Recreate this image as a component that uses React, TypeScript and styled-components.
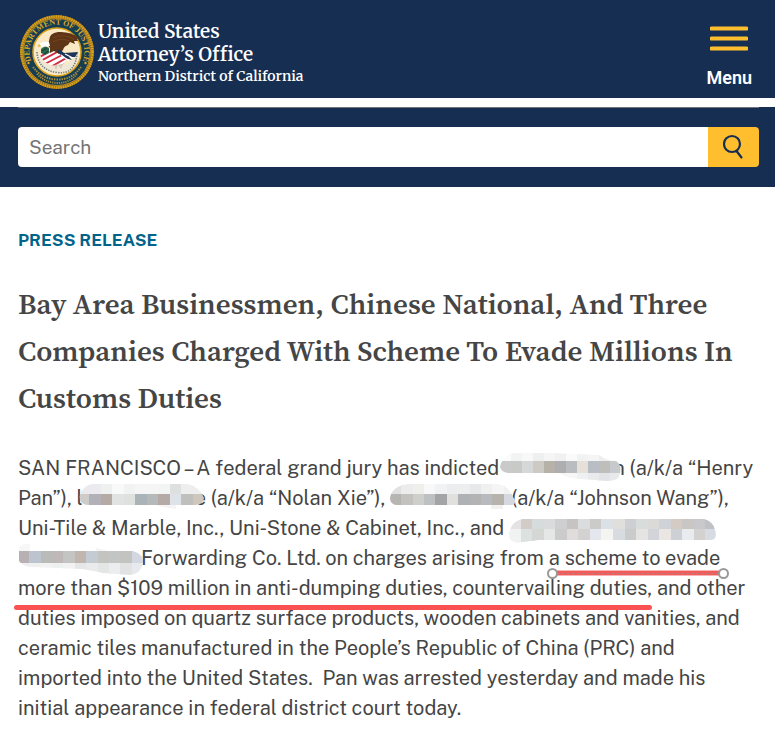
import React from "react";
import styled, { createGlobalStyle } from "styled-components";

const navy = "#162e51";
const gold = "#ffbe2e";
const ink = "#454545";
const red = "#fa5252";

const GlobalStyle = createGlobalStyle`
  *, *::before, *::after { box-sizing: border-box; }
  body {
    margin: 0;
    background: #fff;
    color: ${ink};
    font-family: "Public Sans", "Open Sans", sans-serif;
  }
`;

const Header = styled.header`
  display: flex;
  justify-content: space-between;
  align-items: flex-start;
  padding: 14px 17px 0 18px;
  height: 98px;
  background: ${navy};
  color: #fff;
`;

const Brand = styled.a`
  display: flex;
  gap: 3px;
  color: inherit;
  text-decoration: none;
  font-family: Merriweather, "Liberation Serif", serif;
  font-weight: 600;
`;

const SealIcon = styled.svg`
  display: block;
  width: 77px;
  height: 76px;
`;

const BrandText = styled.span`
  display: flex;
  flex-direction: column;
  padding-top: 6px;
`;

const Office = styled.span`
  font-size: 19px;
  line-height: 23px;
`;

const District = styled.span`
  font-size: 14px;
  line-height: 20px;
`;

const MenuButton = styled.button`
  display: flex;
  flex-direction: column;
  align-items: center;
  gap: 15px;
  padding: 12px 6px 0;
  border: 0;
  background: none;
  color: #fff;
  font: 600 18px/22px Roboto, sans-serif;
  cursor: pointer;
`;

const MenuBars = styled.svg`
  display: block;
  width: 38px;
  height: 26px;
`;

const SearchBand = styled.div`
  margin-top: 9px;
  padding: 0 16px 20px 18px;
  background: ${navy};
`;

const SearchForm = styled.form`
  display: flex;
  padding-top: 19px;
  border-top: 1px solid #71767a;
`;

const SearchInput = styled.input`
  flex: 1;
  min-width: 0;
  height: 40px;
  padding: 0 11px;
  border: 0;
  border-radius: 4px 0 0 4px;
  background: #fff;
  color: ${ink};
  font: 19px "Public Sans", Inter, sans-serif;
  &::placeholder { color: #757575; opacity: 1; }
`;

const SearchButton = styled.button`
  display: grid;
  place-items: center;
  width: 51px;
  height: 40px;
  padding: 0;
  border: 0;
  border-radius: 0 4px 4px 0;
  background: ${gold};
  cursor: pointer;
`;

const Article = styled.main`
  padding: 42px 18px 0;
`;

const Kicker = styled.p`
  margin: 0;
  color: #00638a;
  font: 700 17px/22px "Public Sans", Inter, sans-serif;
`;

const Title = styled.h1`
  margin: 30px 0 31px;
  font: 600 29px/47px "Source Serif 4", "Liberation Serif", serif;
`;

const Body = styled.p`
  margin: 0;
  font-size: 20px;
  line-height: 30px;
  white-space: nowrap;
`;

const MaskArt = styled.svg<{ $before: number; $after: number }>`
  position: relative;
  display: inline-block;
  height: 30px;
  vertical-align: top;
  overflow: visible;
  margin-left: ${(p) => p.$before}px;
  margin-right: ${(p) => p.$after}px;
`;

const Marked = styled.mark`
  position: relative;
  display: inline-block;
  background: none;
  color: inherit;
`;

const Underline = styled.span`
  position: absolute;
  left: -4px;
  right: 0;
  top: 32px;
  height: 5px;
  border-radius: 3px;
  background: ${red};
`;

const SelectedLine = styled.span`
  position: absolute;
  left: 3px;
  right: -4px;
  top: 27px;
  height: 6px;
  background: linear-gradient(#fbb4b4 0 1px, #f25a5a 1px 5px, #fbb4b4 5px);
  &::before {
    content: "";
    position: absolute;
    inset: 3px 0 auto;
    border-top: 1px dashed #b88080;
  }
`;

const Handle = styled.span<{ $side: "left" | "right" }>`
  position: absolute;
  top: -2px;
  ${(p) => p.$side}: -5px;
  width: 11px;
  height: 11px;
  border: 2px solid #999;
  border-radius: 50%;
  background: #fff;
`;

type Row = { y: number; h: number; colors: string[] };
type MaskProps = {
  id: string;
  width: number;
  outline: string;
  rows: Row[];
  before?: number;
  after?: number;
};

function Mask({ id, width, outline, rows, before = 0, after = 0 }: MaskProps) {
  return (
    <MaskArt width={width} height={30} $before={before} $after={after} role="img" aria-label="Redacted name">
      <clipPath id={id}>
        <path d={outline} />
      </clipPath>
      <g clipPath={`url(#${id})`} shapeRendering="crispEdges">
        {rows.map((row) =>
          row.colors.map((color, i) => (
            <rect
              key={`${row.y}-${i}`}
              x={Math.round((i * width) / row.colors.length)}
              y={row.y}
              width={Math.ceil(width / row.colors.length) + 1}
              height={row.h}
              fill={color}
            />
          ))
        )}
      </g>
    </MaskArt>
  );
}

function Seal() {
  return (
    <SealIcon viewBox="0 0 77 76" role="img" aria-label="Department of Justice seal">
      <defs>
        <path id="ringTop" d="M13 47A27.500 27.500 0 1 1 65 47" />
        <clipPath id="shield">
          <path d="M22 41Q28 37 38 37L49 45Q46 52 39 52Q27 52 22 41Z" />
        </clipPath>
      </defs>
      <circle cx="39" cy="38" r="37" fill="#96701a" />
      <circle cx="39" cy="38" r="35.500" fill="none" stroke="#d9a11c" strokeWidth="2.600" strokeDasharray="1.600 .7" />
      <circle cx="39" cy="38" r="33.500" fill="#173d52" stroke="#b98a23" />
      <circle cx="39" cy="38" r="24" fill="#fbe9c6" stroke="#d9a11c" strokeWidth="1.600" />
      <text fill="#d8a928" fontFamily="Liberation Serif, serif" fontWeight="700" fontSize="8">
        <textPath href="#ringTop" startOffset="50%" textAnchor="middle">DEPARTMENT OF JUSTICE</textPath>
      </text>
      <circle cx="10.500" cy="49" r="1.200" fill="#d8a928" />
      <circle cx="67.500" cy="49" r="1.200" fill="#d8a928" />
      <path d="M15 53Q24 65 39 65.500T63 53" fill="none" stroke="#a88b35" strokeWidth="2" strokeDasharray="1.500 1" />
      <path d="M19 60Q27 68.500 39 69T59 60" fill="none" stroke="#a88b35" strokeWidth="1.800" strokeDasharray="1.300 .9" />
      <path d="M18 34Q17 50 27 56Q39 62 51 56Q61 50 60 34L57 40Q53 52 39 53Q25 52 21 40Z" fill="#efe8d6" />
      <path d="M19 38Q20 56 39 58.500T59 38" fill="none" stroke="#747b7a" strokeWidth="1.600" strokeDasharray="1.300 1.200" />
      <g clipPath="url(#shield)">
        <rect x="18" y="34" width="40" height="24" fill="#fff" />
        <path d="M20 44L34 36M21 48L41 37M25 51L46 40M31 54L50 43M38 55L52 47" stroke="#cf2c46" strokeWidth="1.900" />
      </g>
      <path d="M23 35L27 32L31 34L31 39L27 41L23 39Z" fill="#28654b" />
      <path d="M24 37L29 34M26 40L30 37" stroke="#143f35" strokeWidth="1" />
      <path d="M31 27Q31 19 40 18Q52 17 62 24L59 25L60 27L56 27L57 30L52 28L50 31Q46 32 45 36L41 40L36 37L32 39L32 34Q29 31 31 27Z" fill="#5f3517" />
      <path d="M35 24Q44 19 56 25M35 28Q43 23 51 27" fill="none" stroke="#744519" strokeWidth="1" />
      <path d="M21 30Q25 27 31 28L32 32L24 33Z" fill="#fff" />
      <path d="M21 30L19.500 33L23 32Z" fill="#e4ae37" />
      <path d="M41 35L46 39L60 38L57 43L51 43L54 46L47 44L39 38Z" fill="#1d3557" />
      <path d="M43 41L51 47M47 40L55 44" stroke="#fff" strokeWidth="1.200" />
      <path d="M36 51L38 56L40 51L43 55L45 50Z" fill="#d9cbbb" />
    </SealIcon>
  );
}

export default function App() {
  return (
    <>
      <GlobalStyle />
      <Header>
        <Brand href="#">
          <Seal />
          <BrandText>
            <Office>United States</Office>
            <Office>Attorney’s Office</Office>
            <District>Northern District of California</District>
          </BrandText>
        </Brand>
        <MenuButton type="button">
          <MenuBars viewBox="0 0 38 26" aria-hidden="true">
            <path d="M1.500 2.500H36.500M1.500 12.500H36.500M1.500 22.500H36.500" stroke={gold} strokeWidth="4" strokeLinecap="round" />
          </MenuBars>
          Menu
        </MenuButton>
      </Header>
      <SearchBand>
        <SearchForm role="search">
          <SearchInput type="search" aria-label="Search" placeholder="Search" />
          <SearchButton type="submit" aria-label="Search">
            <svg width="22" height="26" viewBox="0 0 22 26" fill="none" stroke={navy} strokeWidth="2.200" strokeLinecap="round" aria-hidden="true">
              <circle cx="9" cy="10" r="8" />
              <path d="M13.500 17L18.500 23.500" />
            </svg>
          </SearchButton>
        </SearchForm>
      </SearchBand>
      <Article>
        <Kicker>PRESS RELEASE</Kicker>
        <Title>
          Bay Area Businessmen, Chinese National, And Three Companies Charged With Scheme To Evade Millions In Customs
          Duties
        </Title>
        <Body>
          SAN FRANCISCO – A federal grand jury has indicted
          <Mask
            id="mask1"
            width={121}
            before={1}
            after={-8}
            outline="M0 14Q2 3 14 0H50L100 2Q103 7 116 8Q123 12 119 24Q116 28 106 28L70 25L60 20H8Q1 19 0 14Z"
            rows={[
              { y: 0, h: 8, colors: ["#fafbfb", "#f2f4f4", "#f8f8f8", "#eeefef", "#f5f5f5", "#f1f1f1", "#fafafa", "#f1f2f2", "#f5f5f5", "#eee", "#f9f9f9"] },
              { y: 8, h: 12, colors: ["#c9cac9", "#c7cac7", "#d6d7d7", "#cdc9c5", "#b6b2aa", "#aeadaf", "#b9bdc0", "#e6e0d9", "#b9bec4", "#c0bebb", "#c7cacd"] },
              { y: 20, h: 8, colors: ["#f5f5f5", "#f5f5f5", "#f5f5f5", "#f3f3f3", "#f5f5f5", "#f3f3f3", "#f7f7f7", "#eff0f1", "#e9eaeb", "#e2e4e6", "#e8e9ea"] },
            ]}
          />
          n (a/k/a “Henry
          <br />
          Pan”), l
          <Mask
            id="mask2"
            width={126}
            before={-5}
            after={-9}
            outline="M2 12Q5 2 15 1H110Q122 4 126 15Q125 22 117 22H98V26L84 24L78 22H12Q0 22 2 12Z"
            rows={[
              { y: 0, h: 11, colors: ["#eceaec", "#ebeaef", "#eff1f1", "#f8f9f8", "#f0f3f2", "#f5f5f5", "#f5f5f6", "#f3f4f4", "#dedfdf", "#efeeee", "#eee"] },
              { y: 11, h: 11, colors: ["#ceccca", "#b1b1b7", "#b6aaa4", "#e0e3e2", "#dfe1df", "#aab3b8", "#b6b9ba", "#b5aaa5", "#dde3e8", "#bfbfbe", "#cfc6bc"] },
              { y: 22, h: 4, colors: ["#f5f5f5"] },
            ]}
          />
          e (a/k/a “Nolan Xie”),{" "}
          <Mask
            id="mask3"
            width={125}
            after={-4}
            outline="M0 15Q2 3 18 1H108Q119 3 123 14Q128 20 122 22H113V26H101V22H10Q0 23 0 15Z"
            rows={[
              { y: 0, h: 11, colors: ["#e1e1e1", "#ececed", "#efefeb", "#f8f8f8", "#f1f2f3", "#ecedee", "#eee", "#e7e8ea", "#f0f0f0", "#f5f5f5", "#f0f1f1"] },
              { y: 11, h: 11, colors: ["#b7b5b2", "#c3c2be", "#cececa", "#bdc1c4", "#a3a4a5", "#e2dfdf", "#afb1b5", "#b3b2b4", "#b9babd", "#b8b2ad", "#d5d8df"] },
              { y: 22, h: 4, colors: ["#f3f1ef"] },
            ]}
          />
          (a/k/a “Johnson Wang”),
          <br />
          Uni-Tile &amp; Marble, Inc., Uni-Stone &amp; Cabinet, Inc., and{" "}
          <Mask
            id="mask4"
            width={208}
            outline="M0 21Q2 8 14 6H195Q205 9 206 17Q209 26 202 27H30L14 29Q0 32 0 21Z"
            rows={[
              { y: 6, h: 10, colors: ["#e4e2e2", "#d3cbc6", "#d6dcdb", "#dadbdc", "#cfcfd2", "#c6c3c3", "#dadcdd", "#cbcbca", "#dce1e7", "#e0dfdb", "#cdcfd2", "#d8dcda", "#dcd9d9", "#cfd2d7", "#d3cbc4", "#c9c6c4", "#c9c9cb", "#bfc1c7"] },
              { y: 16, h: 14, colors: ["#f1f2f2", "#dce1e2", "#d5d7d4", "#e5e7e6", "#cccbcc", "#dfdcdb", "#d4d2d1", "#e4e8ee", "#f4f5f0", "#d8dce0", "#c9cccb", "#e6e3e3", "#d2d4d9", "#eae6e3", "#cdd0d4", "#e8ecef", "#d4d2d1", "#d7dce2"] },
            ]}
          />
          <br />
          <Mask
            id="mask5"
            width={125}
            after={-2}
            outline="M1 5Q5 0 12 1V8H68V2L90 8H115Q126 11 125 20Q123 31 112 32L85 30L65 26L15 24Q5 24 1 18Z"
            rows={[
              { y: 0, h: 8, colors: ["#f7f7f7", "#fafafa", "#fff", "#fff", "#fff", "#f4f4f4", "#f6f6f6", "#fff"] },
              { y: 8, h: 12, colors: ["#b7b1b3", "#bdc4cf", "#b9bbb9", "#bfb8b8", "#c4c4c2", "#c1b6af", "#c4cbd3", "#c3c4bf", "#c3c5c4", "#c3c4c2", "#d3d8e0"] },
              { y: 20, h: 12, colors: ["#eee", "#f0f0f0", "#f2f2f2", "#eff0f0", "#f2f2f2", "#e5e6e6", "#eaebec", "#e3e6e5", "#ecedee", "#e1e3e2", "#e7e9ec"] },
            ]}
          />
          Forwarding Co. Ltd. on charges arising from{" "}
          <Marked>
            a scheme to evade
            <SelectedLine>
              <Handle $side="left" />
              <Handle $side="right" />
            </SelectedLine>
          </Marked>
          <br />
          <Marked>
            more than $109 million in anti-dumping duties, countervailing duties,
            <Underline />
          </Marked>{" "}
          and other
          <br />
          duties imposed on quartz surface products, wooden cabinets and vanities, and
          <br />
          ceramic tiles manufactured in the People’s Republic of China (PRC) and
          <br />
          imported into the United States.&nbsp; Pan was arrested yesterday and made his
          <br />
          initial appearance in federal district court today.
        </Body>
      </Article>
    </>
  );
}
